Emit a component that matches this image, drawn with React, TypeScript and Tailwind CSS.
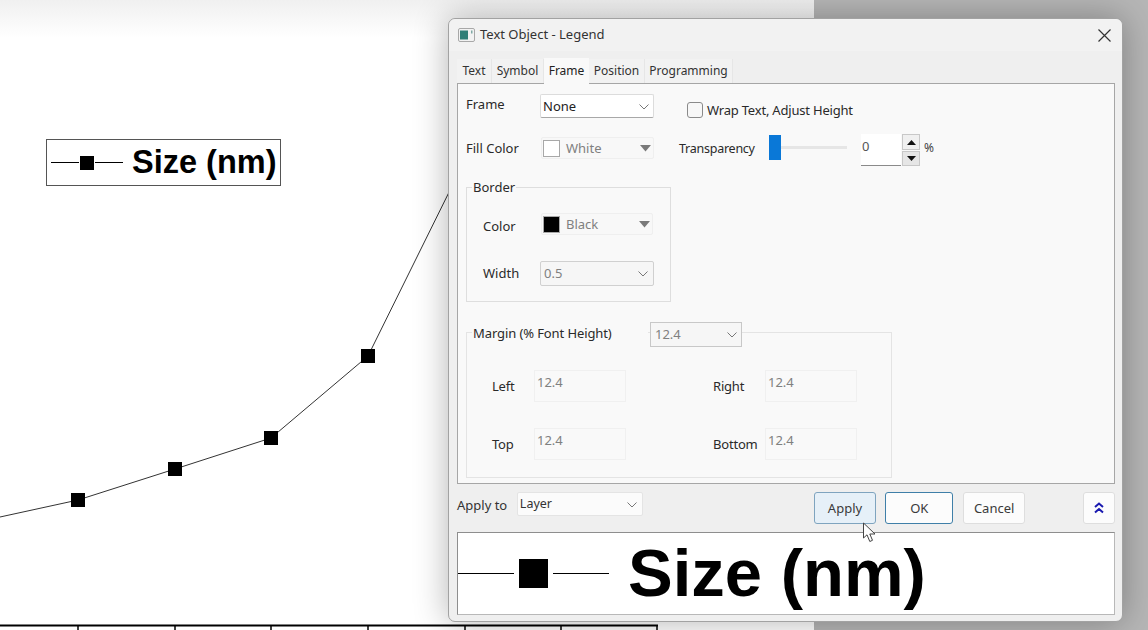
const uiFont = "font-['Noto_Sans','Open_Sans',sans-serif]";
const chartFont = "font-['Liberation_Sans',Arial,sans-serif]";

const tabs = [
  { label: "Text", width: "w-[35px]" },
  { label: "Symbol", width: "w-[52px]" },
  { label: "Frame", width: "w-[45px]", active: true },
  { label: "Position", width: "w-[56px]" },
  { label: "Programming", width: "w-[88px]" },
];

function Chevron() {
  return (
    <svg width="10" height="6" viewBox="0 0 10 6" fill="none" stroke="#777" strokeWidth="1">
      <path d="M0.5 0.5 L5 5 L9.5 0.5" />
    </svg>
  );
}

function Caret() {
  return (
    <svg width="11" height="7" viewBox="0 0 11 7" fill="#7a7a7a">
      <path d="M0 0 H11 L5.5 6.5 Z" />
    </svg>
  );
}

function LegendKey({ line, square, gap }: { line: string; square: string; gap: string }) {
  return (
    <div className={`flex items-center ${gap}`}>
      <div className={`${line} h-px bg-black`} />
      <div className={`${square} bg-black`} />
      <div className={`${line} h-px bg-black`} />
    </div>
  );
}

function DisabledField({ label, labelWidth }: { label: string; labelWidth: string }) {
  return (
    <div className="flex items-start">
      <span className={`${labelWidth} mt-[6px] text-[13px] leading-[20px] tracking-[-0.2px] text-[#2a2a2a]`}>{label}</span>
      <div className="h-[32px] w-[92px] border border-[#f0f0f0] bg-[#f9f9f9] pl-[2px] text-[13px] leading-[22px] text-[#808080]">
        12.4
      </div>
    </div>
  );
}

function ColorSelect({ swatch, name, width }: { swatch: string; name: string; width: string }) {
  return (
    <div className={`flex h-[22px] ${width} items-center rounded-[2px] border border-[#efefef] bg-[#f8f8f8] pl-px pr-[2px]`}>
      <div className={`h-[17px] w-[17px] border border-[#a8a8a8] ${swatch}`} />
      <span className="ml-[6px] mt-[2px] flex-1 text-[13px] text-[#808080]">{name}</span>
      <Caret />
    </div>
  );
}

function ActionButton({ label, className }: { label: string; className: string }) {
  return (
    <button className={`flex h-[32px] items-center justify-center rounded-[3px] border pt-px text-[13px] text-[#3a3a3a] ${className}`}>
      {label}
    </button>
  );
}

function Dialog() {
  return (
    <div className={`absolute left-[448px] top-[18px] flex h-[604px] w-[675px] flex-col rounded-[7px] border border-[#a2a2a2] bg-[#efefef] shadow-[0_0_34px_rgba(0,0,0,0.3)] ${uiFont}`}>
      {/* title bar */}
      <div className="flex h-[32px] shrink-0 items-center rounded-t-[7px] bg-[#f2f2f2] pl-[9px] pr-[11px]">
        <svg width="17" height="14" viewBox="0 0 17 14">
          <rect x="0.5" y="0.5" width="16" height="13" rx="1.5" fill="#f2f2f2" stroke="#a8a8a8" />
          <rect x="2" y="2.5" width="8" height="9" fill="#2f7f78" />
          <rect x="13" y="2.5" width="1.5" height="3" fill="#7fa8a4" />
        </svg>
        <span className="ml-[5px] flex-1 text-[13px] text-[#333]">Text Object - Legend</span>
        <svg width="13" height="13" viewBox="0 0 13 13" stroke="#333" strokeWidth="1.2">
          <path d="M0.5 0.5 L12.5 12.5 M12.5 0.5 L0.5 12.5" />
        </svg>
      </div>

      {/* tabs */}
      <div className="ml-[8px] mt-[8px] flex h-[24px] shrink-0 items-end text-[12px] text-[#333]">
        {tabs.map((tab) => (
          <div
            key={tab.label}
            className={
              tab.active
                ? `${tab.width} relative z-10 -mb-px flex h-[26px] items-center justify-center bg-[#f9f9f9] text-[#222]`
                : `${tab.width} flex h-[24px] items-center justify-center border-r border-[#e6e6e6] bg-[#f2f2f2]`
            }
          >
            {tab.label}
          </div>
        ))}
      </div>

      {/* frame tab page */}
      <div className="ml-[8px] mr-[7px] flex h-[401px] shrink-0 flex-col border border-[#a6a6a6] bg-[#f9f9f9] pl-[8px]">
        <div className="mt-[10px] flex h-[24px] items-start">
          <span className="w-[74px] text-[13px] leading-[20px] text-[#2a2a2a]">Frame</span>
          <div className="flex h-[24px] w-[114px] items-center justify-between rounded-[2px] border border-[#dcdcdc] border-b-[#a8a8a8] bg-white pl-[2px] pr-[4px] pt-px text-[13px] text-[#222]">
            None
            <Chevron />
          </div>
          <div className="ml-[33px] mt-[8px] h-[16px] w-[16px] rounded-[3px] border border-[#8a8a8a] bg-[#f7f7f7]" />
          <span className="ml-[4px] mt-[7px] text-[13px] leading-[18px] tracking-[-0.2px] text-[#2a2a2a]">Wrap Text, Adjust Height</span>
        </div>

        <div className="mt-[16px] flex h-[32px] items-start">
          <span className="mt-[4px] w-[75px] text-[13px] leading-[20px] text-[#2a2a2a]">Fill Color</span>
          <div className="mt-[3px]">
            <ColorSelect swatch="bg-white" name="White" width="w-[113px]" />
          </div>
          <span className="ml-[25px] mt-[5px] w-[90px] text-[12.5px] leading-[20px] tracking-[-0.25px] text-[#2a2a2a]">Transparency</span>
          <div className="relative mt-[1px] h-[25px] w-[78px]">
            <div className="absolute left-0 right-0 top-[11px] h-[3px] bg-[#e6e6e6]" />
            <div className="absolute left-0 top-0 h-[25px] w-[12px] bg-[#0a78d7]" />
          </div>
          <div className="ml-[14px] h-[32px] w-[40px] border-b border-[#8a8a8a] bg-white pl-px text-[13px] leading-[24px] text-[#555]">0</div>
          <div className="ml-[1px] flex h-[32px] w-[18px] flex-col gap-px">
            <div className="flex h-[16px] items-center justify-center border border-[#c8c8c8] bg-[#f0f0f0]">
              <svg width="9" height="5" viewBox="0 0 9 5" fill="#111"><path d="M4.5 0 L9 5 H0 Z" /></svg>
            </div>
            <div className="flex h-[15px] items-center justify-center border border-[#c8c8c8] bg-[#e6e6e6]">
              <svg width="9" height="5" viewBox="0 0 9 5" fill="#111"><path d="M0 0 H9 L4.5 5 Z" /></svg>
            </div>
          </div>
          <span className="ml-[4px] mt-[4px] text-[12px] leading-[20px] text-[#444]">%</span>
        </div>

        <div className="relative mt-[21px] h-[115px] w-[205px] border border-[#dedede] pl-[16px]">
          <span className="absolute -top-[10px] left-[5px] bg-[#f9f9f9] px-px text-[13px] leading-[18px] text-[#2a2a2a]">Border</span>
          <div className="mt-[25px] flex items-start">
            <span className="mt-[3px] w-[58px] text-[13px] leading-[20px] text-[#2a2a2a]">Color</span>
            <ColorSelect swatch="bg-black" name="Black" width="w-[112px]" />
          </div>
          <div className="mt-[25px] flex items-start">
            <span className="mt-[2px] w-[57px] text-[13px] leading-[20px] text-[#2a2a2a]">Width</span>
            <div className="flex h-[25px] w-[114px] items-center justify-between rounded-[2px] border border-[#d0d0d0] bg-[#f6f6f6] pl-[3px] pr-[5px] text-[13px] text-[#808080]">
              0.5
              <Chevron />
            </div>
          </div>
        </div>

        <div className="relative mt-[30px] h-[146px] w-[426px] border border-[#e4e4e4] pl-[25px] pt-[37px]">
          <span className="absolute -top-[9px] left-[5px] w-[176px] bg-[#f9f9f9] px-px text-[13px] leading-[18px] tracking-[-0.1px] text-[#2a2a2a]">Margin (% Font Height)</span>
          <div className="absolute -top-[11px] left-[183px] flex h-[25px] w-[92px] items-center justify-between border border-[#c8c8c8] bg-[#f6f6f6] pl-[4px] pr-[4px] text-[13px] text-[#808080]">
            12.4
            <Chevron />
          </div>
          <div className="grid grid-cols-[221px_144px] gap-y-[26px]">
            <DisabledField label="Left" labelWidth="w-[42px]" />
            <DisabledField label="Right" labelWidth="w-[52px]" />
            <DisabledField label="Top" labelWidth="w-[42px]" />
            <DisabledField label="Bottom" labelWidth="w-[52px]" />
          </div>
        </div>
      </div>

      {/* apply row */}
      <div className="ml-[8px] mr-[7px] mt-[8px] flex h-[32px] shrink-0 items-start">
        <span className="mt-[3px] w-[60px] text-[13px] leading-[20px] text-[#333]">Apply to</span>
        <div className="flex h-[24px] w-[126px] items-center justify-between rounded-[2px] border border-[#e4e4e4] bg-[#fbfbfb] pl-[2px] pr-[5px] pt-px text-[12.5px] text-[#333]">
          Layer
          <Chevron />
        </div>
        <ActionButton label="Apply" className="ml-[171px] w-[63px] border-[#7fa4bf] bg-[#e6f0f8]" />
        <ActionButton label="OK" className="ml-[9px] w-[68px] border-[#3f7fa8] bg-[#fcfcfc]" />
        <ActionButton label="Cancel" className="ml-[10px] w-[62px] border-[#dedede] bg-[#fcfcfc]" />
        <button className="ml-[58px] flex h-[32px] w-[32px] items-center justify-center rounded-[3px] border border-[#dedede] bg-[#fcfcfc]">
          <svg width="10" height="12" viewBox="0 0 10 12" fill="none" stroke="#1a1ab0" strokeWidth="2">
            <path d="M1 5 L5 1.5 L9 5 M1 10.5 L5 7 L9 10.5" />
          </svg>
        </button>
      </div>

      {/* preview */}
      <div className={`ml-[8px] mr-[7px] mt-[8px] flex h-[83px] shrink-0 items-center border border-[#8e8e8e] border-r-[#b8b8b8] border-b-[#b8b8b8] bg-white ${chartFont}`}>
        <LegendKey line="w-[56px]" square="h-[29px] w-[29px]" gap="gap-[5px]" />
        <span className="mb-[3px] ml-[19px] text-[67px] font-bold leading-none text-black">Size (nm)</span>
      </div>
    </div>
  );
}

export default function App() {
  return (
    <div className="relative flex h-[630px] w-[1148px] overflow-hidden bg-white">
      <div className="h-full w-[814px] bg-white">
        <div className="h-[38px] bg-gradient-to-b from-[#f0f0f0] to-white" />
      </div>
      <div className="h-full flex-1 bg-[#b6b6b6]" />

      {/* graph behind the dialog */}
      <svg className="absolute left-0 top-0" width="814" height="630" viewBox="0 0 814 630">
        <polyline points="0,517 78,500 175,469 271,438 368,356 460,170" fill="none" stroke="#333" strokeWidth="1" />
        {[[78, 500], [175, 469], [271, 438], [368, 356]].map(([x, y]) => (
          <rect key={x} x={x - 7} y={y - 7} width="14" height="14" fill="#000" />
        ))}
        <path d="M0 625.5 H658" stroke="#000" strokeWidth="2" />
        {[78, 175, 271, 368, 465, 561, 657].map((x) => (
          <path key={x} d={`M${x} 625 V630`} stroke="#000" strokeWidth="1.5" />
        ))}
      </svg>

      <div className={`absolute left-[46px] top-[139px] flex h-[47px] w-[235px] items-center border border-[#555] bg-white pl-[4px] ${chartFont}`}>
        <LegendKey line="w-[28px]" square="h-[14px] w-[14px]" gap="gap-px" />
        <span className="ml-[9px] text-[32.5px] font-bold leading-none text-black">Size (nm)</span>
      </div>

      <Dialog />

      {/* mouse pointer */}
      <svg className="absolute left-[862px] top-[522px]" width="16" height="21" viewBox="0 0 16 21" fill="#fff" stroke="#444" strokeWidth="1">
        <path d="M1.5 1 V16 L5 12.8 L7.8 19.5 L10.5 18.3 L7.8 12 H13 Z" />
      </svg>
    </div>
  );
}
